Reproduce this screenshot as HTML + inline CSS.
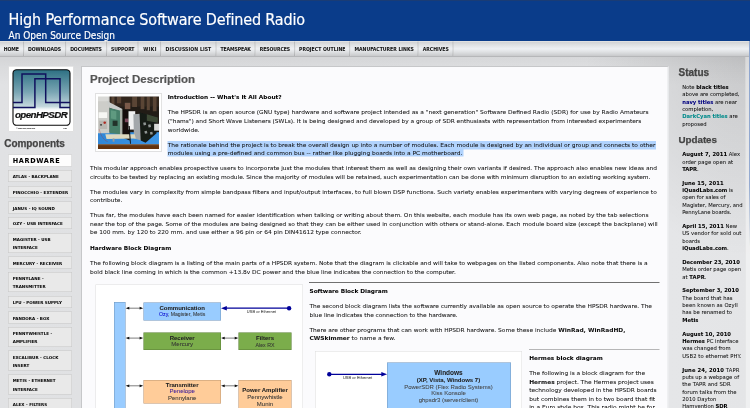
<!DOCTYPE html>
<html lang="en">
<head>
<meta charset="utf-8">
<title>High Performance Software Defined Radio</title>
<style>
html,body{margin:0;padding:0;width:750px;height:408px;overflow:hidden;background:#dcdcdc;}
#page{position:absolute;left:0;top:0;width:1500px;height:816px;transform:scale(.5);transform-origin:0 0;overflow:hidden;
 font-family:"DejaVu Sans","Liberation Sans",sans-serif;color:#222;
 background:linear-gradient(180deg,rgba(0,0,0,.06) 114px,rgba(0,0,0,.03) 134px,rgba(0,0,0,0) 170px),radial-gradient(ellipse 330px 400px at 1500px 114px,rgba(0,0,0,.125) 0,rgba(0,0,0,.07) 45%,rgba(0,0,0,0) 100%),linear-gradient(90deg,#e1e2e4 0,#e0e1e3 160px,#e5e6e8 1336px,#e4e5e7 1500px);}
.t{position:absolute;white-space:nowrap;line-height:1;-webkit-text-stroke:0.1px currentColor;}
#txt{position:absolute;left:0;top:0;width:1500px;height:816px;filter:blur(0.3px);}
.t b{font-weight:bold;}
#header{position:absolute;left:0;top:0;width:1500px;height:82px;background:#0a3c8a;border-top:1.6px solid #2a3c60;box-sizing:border-box;}
#nav{position:absolute;left:0;top:82px;width:1500px;height:32px;box-sizing:border-box;
 background:linear-gradient(180deg,#eeeeec 0,#d2d3d5 7%,#dfe1e3 26%,#eef0f3 52%,#e0e2e4 72%,#c8c9cb 100%);border-bottom:2px solid #b6b7b9;}
#nav i{position:absolute;top:1px;width:1.5px;height:29px;background:rgba(0,0,0,.13);border-right:1.5px solid rgba(255,255,255,.55);}
#logo{position:absolute;left:17px;top:132px;width:130px;height:131px;background:#fff;border:1.5px solid #cfcfcf;box-sizing:border-box;}
#main{position:absolute;left:162px;top:132px;width:1175px;height:700px;background:#fbfbfd;border:2px solid #c6c7c9;border-right-color:#e4e5e7;box-sizing:border-box;}
.mi{position:absolute;left:16px;width:128px;box-sizing:border-box;background:#e9e9e9;border:1.5px solid #c4c4c4;}
.mi.cur{background:#fdfdfd;}
.hl{position:absolute;background:#b1d3fd;}
.hr{position:absolute;height:1.4px;background:#707070;}
.dg{position:absolute;background:#fff;border:1px solid #dcdcdc;box-sizing:border-box;}
.bx{position:absolute;box-sizing:border-box;border:1.4px solid rgba(0,0,0,.28);}
#photo{position:absolute;left:190px;top:187px;width:134px;height:116px;background:#fff;border:1.5px solid #c4c4c4;box-sizing:border-box;overflow:hidden;}
#photo svg{left:5px;top:4px;}
#sbar{position:absolute;left:1490px;top:114px;width:10px;height:702px;background:rgba(255,255,255,.42);border-left:1px solid rgba(0,0,0,.07);box-sizing:border-box;}
#scroll{position:absolute;left:1497.5px;top:82px;width:3px;height:410px;background:linear-gradient(180deg,#4d74bc 0,#5a7ec2 70%,rgba(120,150,210,0) 100%);border-left:1.5px solid rgba(240,240,232,.8);}
svg{position:absolute;left:0;top:0;}
</style>
</head>
<body>
<div id="page">
<div id="header"></div>
<div id="nav"><i style="left:46px"></i><i style="left:130px"></i><i style="left:212px"></i><i style="left:275px"></i><i style="left:320px"></i><i style="left:431px"></i><i style="left:509px"></i><i style="left:588px"></i><i style="left:698px"></i><i style="left:835px"></i><i style="left:905px"></i></div>
<div id="logo"></div>
<div id="main"></div>
<div class="mi cur" style="top:309.4px;height:23.2px"></div>
<div class="mi" style="top:340.4px;height:24.0px"></div>
<div class="mi" style="top:371.7px;height:24.0px"></div>
<div class="mi" style="top:403.0px;height:24.0px"></div>
<div class="mi" style="top:434.3px;height:24.0px"></div>
<div class="mi" style="top:465.6px;height:40.0px"></div>
<div class="mi" style="top:512.9px;height:24.0px"></div>
<div class="mi" style="top:544.2px;height:40.0px"></div>
<div class="mi" style="top:591.5px;height:24.0px"></div>
<div class="mi" style="top:622.8px;height:24.0px"></div>
<div class="mi" style="top:654.1px;height:40.0px"></div>
<div class="mi" style="top:701.4px;height:40.0px"></div>
<div class="mi" style="top:748.7px;height:40.0px"></div>
<div class="mi" style="top:796.0px;height:24.0px"></div>
<div class="hl" style="left:335.0px;top:281.6px;width:977.4px;height:17.0px"></div>
<div class="hl" style="left:335.0px;top:298.4px;width:591.6px;height:14.8px"></div>
<div class="hr" style="left:618.4px;top:564.4px;width:700.2px"></div>
<div class="hr" style="left:1058.4px;top:697.6px;width:260.2px"></div>
<div class="dg" style="left:191.2px;top:569.0px;width:415.2px;height:300px"></div>
<div class="dg" style="left:630.4px;top:702.4px;width:414.0px;height:200px"></div>
<div class="bx" style="left:227.6px;top:604.0px;width:23.6px;height:236.0px;background:#99ccff"></div>
<div class="bx" style="left:286.8px;top:605.2px;width:155.0px;height:36.0px;background:#99ccff"></div>
<div class="bx" style="left:286.8px;top:664.8px;width:155.0px;height:35.2px;background:#7bad4b"></div>
<div class="bx" style="left:477.0px;top:664.8px;width:106.0px;height:35.2px;background:#7bad4b"></div>
<div class="bx" style="left:286.8px;top:759.6px;width:155.0px;height:47.2px;background:#ffcc99"></div>
<div class="bx" style="left:477.0px;top:759.6px;width:106.0px;height:80.4px;background:#ffcc99"></div>
<div class="bx" style="left:774.4px;top:725.0px;width:248.0px;height:115.0px;background:#99ccff"></div>
<svg width="1500" height="816" viewBox="0 0 750 408" style="pointer-events:none"><line x1="127.5" y1="308.2" x2="141.4" y2="308.2" stroke="#111" stroke-width="0.55"/><path d="M125.7 308.2 l3.6 -1.4 v2.8z M143.20000000000002 308.2 l-3.6 -1.4 v2.8z" fill="#111"/><line x1="127.5" y1="338.1" x2="141.4" y2="338.1" stroke="#111" stroke-width="0.55"/><path d="M125.7 338.1 l3.6 -1.4 v2.8z M143.20000000000002 338.1 l-3.6 -1.4 v2.8z" fill="#111"/><line x1="127.5" y1="385.8" x2="141.4" y2="385.8" stroke="#111" stroke-width="0.55"/><path d="M125.7 385.8 l3.6 -1.4 v2.8z M143.20000000000002 385.8 l-3.6 -1.4 v2.8z" fill="#111"/><line x1="222.9" y1="338.1" x2="236.5" y2="338.1" stroke="#111" stroke-width="0.55"/><path d="M221.1 338.1 l3.6 -1.4 v2.8z M238.3 338.1 l-3.6 -1.4 v2.8z" fill="#111"/><line x1="222.9" y1="385.8" x2="236.5" y2="385.8" stroke="#111" stroke-width="0.55"/><path d="M221.1 385.8 l3.6 -1.4 v2.8z M238.3 385.8 l-3.6 -1.4 v2.8z" fill="#111"/><line x1="225" y1="308.2" x2="289.1" y2="308.2" stroke="#000099" stroke-width="1.25"/><circle cx="289.1" cy="308.2" r="2.2" fill="#000099"/><path d="M221 308.2 l5.8 -2.3 v4.6z" fill="#000099"/><line x1="329.3" y1="374.3" x2="383" y2="374.3" stroke="#000099" stroke-width="1.25"/><circle cx="329.3" cy="374.3" r="2.2" fill="#000099"/><path d="M387.1 374.3 l-5.8 -2.3 v4.6z" fill="#000099"/><defs><linearGradient id="lg" x1="0" y1="0" x2="0" y2="1"><stop offset="0" stop-color="#2d7083"/><stop offset="0.4" stop-color="#79a5b3"/><stop offset="0.66" stop-color="#c3d7dd"/><stop offset="0.71" stop-color="#f2f7f8"/><stop offset="0.75" stop-color="#fff"/></linearGradient>
<clipPath id="lc"><rect x="13" y="69.7" width="57" height="55.6" rx="3.6"/></clipPath></defs>
<rect x="13" y="69.7" width="57" height="55.6" rx="3.6" fill="url(#lg)" stroke="#0a0a0a" stroke-width="1.1"/>
<g clip-path="url(#lc)" fill="none" stroke="#10105e" stroke-width="1.5"><path d="M12 102.6H22V74H45.7V102.6H71"/><path d="M12 107.4H34.9V78.7H60V107.4H71"/></g></svg>
<div id="photo"><svg width="122" height="105" viewBox="0 0 100 100" style="left:5px;top:5px" preserveAspectRatio="none">
<defs><filter id="pb" x="-5%" y="-5%" width="110%" height="110%"><feGaussianBlur stdDeviation="0.9"/></filter>
<linearGradient id="tb" x1="0" y1="0" x2="1" y2="0"><stop offset="0" stop-color="#2f86d6"/><stop offset="1" stop-color="#3f97e6"/></linearGradient></defs>
<g filter="url(#pb)">
<rect x="-5" y="-5" width="110" height="110" fill="#241d19"/>
<rect x="-5" y="-5" width="110" height="24" fill="#30261f"/>
<g fill="#5a4536"><rect x="22" y="0" width="5" height="17"/><rect x="31" y="0" width="7" height="13"/><rect x="56" y="0" width="8" height="20"/><rect x="70" y="0" width="6" height="24"/><rect x="80" y="0" width="5" height="26"/><rect x="90" y="0" width="6" height="28"/></g>
<rect x="44" y="12" width="9" height="12" fill="#7a5a48"/>
<rect x="-5" y="68" width="110" height="26" fill="url(#tb)"/>
<rect x="-5" y="92.5" width="110" height="14" fill="#63300f"/>
<rect x="-5" y="90.8" width="110" height="2" fill="#8a5a32"/>
<rect x="-5" y="-5" width="24" height="75" fill="#cdcdc9"/>
<rect x="-5" y="-5" width="22" height="14" fill="#d9d9d6"/>
<rect x="1" y="30" width="14" height="11" fill="#f7f7f4"/>
<rect x="2" y="46" width="13" height="16" fill="#b9b7b2"/>
<circle cx="11" cy="50" r="2.2" fill="#b02a22"/><circle cx="5" cy="54" r="1.6" fill="#333"/>
<path d="M14 8 L40 24 L40 30 L19 22 Z" fill="#c9ccca"/>
<path d="M19 22 L38 27 L38 72 L19 70 Z" fill="#46806a"/>
<path d="M21 26 L30 28 L30 44 L21 42 Z" fill="#5f9a80"/>
<rect x="24" y="46" width="8" height="10" fill="#22302a"/>
<path d="M36 26 L41 24 L41 76 L36 74 Z" fill="#aab0a8"/>
<path d="M40 24 L52 27 L52 84 L40 78 Z" fill="#14110f"/>
<rect x="44" y="42" width="6" height="7" fill="#7c4a5c"/>
<rect x="50" y="28" width="11" height="35" fill="#f0f1f1"/>
<path d="M58 34 L70 33 L71 84 L59 80 Z" fill="#a3a8ab"/>
<path d="M68 30 L95 38 L96 70 L78 88 L70 84 Z" fill="#191a18"/>
<path d="M80 34 L98 40 L98 50 L80 46 Z" fill="#3d4a36"/>
<path d="M74 50 l4 -1 l1 5 l-4 1z M82 54 l4 -1 l1 5 l-4 1z M76 66 l4 -1 l1 5 l-4 1z M85 68 l4 -1 l1 5 l-4 1z" fill="#8f9693"/>
<rect x="92" y="52" width="13" height="13" fill="#d9dad8"/>
<path d="M12 72 L60 72 L62 80 L14 81 Z" fill="#ddd8bf"/>
<rect x="24" y="80" width="3" height="6" fill="#999"/>
<path d="M50 56 L52 56 L54 90 L52.5 90 Z" fill="#111"/>
<path d="M2 62 C4 74 10 84 16 86" stroke="#a33" stroke-width="0.6" fill="none"/>
</g></svg></div>
<div id="sbar"></div><div id="scroll"></div>
<div id="txt">
<span class="t" style="left:17.0px;top:22.9px;font-size:32px;font-family:'DejaVu Sans Condensed','DejaVu Sans','Liberation Sans',sans-serif;color:#fff;letter-spacing:-0.304px;-webkit-text-stroke:0.35px #fff;">High Performance Software Defined Radio</span>
<span class="t" style="left:17.0px;top:59.5px;font-size:20px;font-family:'DejaVu Sans Condensed','DejaVu Sans','Liberation Sans',sans-serif;color:#fff;letter-spacing:0.009px;-webkit-text-stroke:0.3px #fff;">An Open Source Design</span>
<span class="t" style="left:7.6px;top:93.8px;font-size:9.2px;font-weight:bold;color:#111;letter-spacing:-0.280px;">HOME</span>
<span class="t" style="left:55.8px;top:93.8px;font-size:9.2px;font-weight:bold;color:#111;letter-spacing:-0.169px;">DOWNLOADS</span>
<span class="t" style="left:140.4px;top:93.8px;font-size:9.2px;font-weight:bold;color:#111;letter-spacing:-0.271px;">DOCUMENTS</span>
<span class="t" style="left:222.0px;top:93.8px;font-size:9.2px;font-weight:bold;color:#111;letter-spacing:-0.214px;">SUPPORT</span>
<span class="t" style="left:286.6px;top:93.8px;font-size:9.2px;font-weight:bold;color:#111;letter-spacing:0.677px;">WIKI</span>
<span class="t" style="left:331.2px;top:93.8px;font-size:9.2px;font-weight:bold;color:#111;letter-spacing:0.162px;">DISCUSSION LIST</span>
<span class="t" style="left:441.0px;top:93.8px;font-size:9.2px;font-weight:bold;color:#111;letter-spacing:-0.228px;">TEAMSPEAK</span>
<span class="t" style="left:519.6px;top:93.8px;font-size:9.2px;font-weight:bold;color:#111;letter-spacing:-0.173px;">RESOURCES</span>
<span class="t" style="left:598.0px;top:93.8px;font-size:9.2px;font-weight:bold;color:#111;letter-spacing:0.034px;">PROJECT OUTLINE</span>
<span class="t" style="left:708.8px;top:93.8px;font-size:9.2px;font-weight:bold;color:#111;letter-spacing:0.015px;">MANUFACTURER LINKS</span>
<span class="t" style="left:845.6px;top:93.8px;font-size:9.2px;font-weight:bold;color:#111;letter-spacing:-0.031px;">ARCHIVES</span>
<span class="t" style="left:8.6px;top:277.1px;font-size:20px;font-family:'Liberation Sans',sans-serif;font-weight:bold;color:#444;letter-spacing:-0.142px;-webkit-text-stroke:0.5px #444;">Components</span>
<span class="t" style="left:25.4px;top:314.4px;font-size:13px;font-weight:bold;color:#000;letter-spacing:1.368px;">HARDWARE</span>
<span class="t" style="left:25.4px;top:349.1px;font-size:8.1px;font-weight:bold;color:#000;letter-spacing:0.029px;">ATLAS - BACKPLANE</span>
<span class="t" style="left:25.4px;top:380.4px;font-size:8.1px;font-weight:bold;color:#000;letter-spacing:0.139px;">PINOCCHIO - EXTENDER</span>
<span class="t" style="left:25.4px;top:411.7px;font-size:8.1px;font-weight:bold;color:#000;letter-spacing:0.1px;">JANUS - IQ SOUND</span>
<span class="t" style="left:25.4px;top:443.0px;font-size:8.1px;font-weight:bold;color:#000;letter-spacing:0.1px;">OZY - USB INTERFACE</span>
<span class="t" style="left:25.4px;top:474.3px;font-size:8.1px;font-weight:bold;color:#000;letter-spacing:0.1px;">MAGISTER - USB</span>
<span class="t" style="left:25.4px;top:490.5px;font-size:8.1px;font-weight:bold;color:#000;letter-spacing:0.1px;">INTERFACE</span>
<span class="t" style="left:25.4px;top:521.6px;font-size:8.1px;font-weight:bold;color:#000;letter-spacing:0.1px;">MERCURY - RECEIVER</span>
<span class="t" style="left:25.4px;top:552.9px;font-size:8.1px;font-weight:bold;color:#000;letter-spacing:0.1px;">PENNYLANE -</span>
<span class="t" style="left:25.4px;top:569.1px;font-size:8.1px;font-weight:bold;color:#000;letter-spacing:0.1px;">TRANSMITTER</span>
<span class="t" style="left:25.4px;top:600.2px;font-size:8.1px;font-weight:bold;color:#000;letter-spacing:0.1px;">LPU - POWER SUPPLY</span>
<span class="t" style="left:25.4px;top:631.5px;font-size:8.1px;font-weight:bold;color:#000;letter-spacing:0.1px;">PANDORA - BOX</span>
<span class="t" style="left:25.4px;top:662.8px;font-size:8.1px;font-weight:bold;color:#000;letter-spacing:0.1px;">PENNYWHISTLE -</span>
<span class="t" style="left:25.4px;top:679.0px;font-size:8.1px;font-weight:bold;color:#000;letter-spacing:0.1px;">AMPLIFIER</span>
<span class="t" style="left:25.4px;top:710.1px;font-size:8.1px;font-weight:bold;color:#000;letter-spacing:0.1px;">EXCALIBUR - CLOCK</span>
<span class="t" style="left:25.4px;top:726.3px;font-size:8.1px;font-weight:bold;color:#000;letter-spacing:0.1px;">INSERT</span>
<span class="t" style="left:25.4px;top:757.4px;font-size:8.1px;font-weight:bold;color:#000;letter-spacing:0.1px;">METIS - ETHERNET</span>
<span class="t" style="left:25.4px;top:773.6px;font-size:8.1px;font-weight:bold;color:#000;letter-spacing:0.1px;">INTERFACE</span>
<span class="t" style="left:25.4px;top:804.7px;font-size:8.1px;font-weight:bold;color:#000;letter-spacing:0.1px;">ALEX - FILTERS</span>
<span class="t" style="left:180.0px;top:147.1px;font-size:23px;font-family:'Liberation Sans',sans-serif;font-weight:bold;color:#555;letter-spacing:-0.047px;-webkit-text-stroke:0.4px #555;">Project Description</span>
<span class="t" style="left:335.4px;top:188.5px;font-size:11.6px;font-weight:bold;color:#000;letter-spacing:-0.004px;">Introduction -- What's It All About?</span>
<span class="t" style="left:335.4px;top:218.9px;font-size:11.8px;color:#111;">The HPSDR is an open source (GNU type) hardware and software project intended as a "next generation" Software Defined Radio (SDR) for use by Radio Amateurs</span>
<span class="t" style="left:335.4px;top:236.5px;font-size:11.8px;color:#111;letter-spacing:-0.036px;">("hams") and Short Wave Listeners (SWLs). It is being designed and developed by a group of SDR enthusiasts with representation from interested experimenters</span>
<span class="t" style="left:335.4px;top:253.9px;font-size:11.8px;color:#111;">worldwide.</span>
<span class="t" style="left:335.4px;top:283.5px;font-size:11.8px;color:#111;letter-spacing:-0.035px;">The rationale behind the project is to break the overall design up into a number of modules. Each module is designed by an individual or group and connects to other</span>
<span class="t" style="left:335.4px;top:300.9px;font-size:11.8px;color:#111;letter-spacing:-0.019px;">modules using a pre-defined and common bus -- rather like plugging boards into a PC motherboard.</span>
<span class="t" style="left:180.0px;top:330.7px;font-size:11.8px;color:#111;letter-spacing:-0.043px;">This modular approach enables prospective users to incorporate just the modules that interest them as well as designing their own variants if desired. The approach also enables new ideas and</span>
<span class="t" style="left:180.0px;top:348.3px;font-size:11.8px;color:#111;letter-spacing:-0.098px;">circuits to be tested by replacing an existing module. Since the majority of modules will be retained, such experimentation can be done with minimum disruption to an existing working system.</span>
<span class="t" style="left:180.0px;top:377.5px;font-size:11.8px;color:#111;letter-spacing:-0.038px;">The modules vary in complexity from simple bandpass filters and input/output interfaces, to full blown DSP functions. Such variety enables experimenters with varying degrees of experience to</span>
<span class="t" style="left:180.0px;top:395.1px;font-size:11.8px;color:#111;">contribute.</span>
<span class="t" style="left:180.0px;top:424.1px;font-size:11.8px;color:#111;letter-spacing:-0.045px;">Thus far, the modules have each been named for easier identification when talking or writing about them. On this website, each module has its own web page, as noted by the tab selections</span>
<span class="t" style="left:180.0px;top:441.7px;font-size:11.8px;color:#111;letter-spacing:-0.035px;">near the top of the page. Some of the modules are being designed so that they can be either used in conjunction with others or stand-alone. Each module board size (except the backplane) will</span>
<span class="t" style="left:180.0px;top:459.3px;font-size:11.8px;color:#111;letter-spacing:-0.007px;">be 100 mm. by 120 to 220 mm. and use either a 96 pin or 64 pin DIN41612 type connector.</span>
<span class="t" style="left:180.0px;top:491.1px;font-size:11.6px;font-weight:bold;color:#000;">Hardware Block Diagram</span>
<span class="t" style="left:180.0px;top:520.5px;font-size:11.8px;color:#111;letter-spacing:-0.030px;">The following block diagram is a listing of the main parts of a HPSDR system. Note that the diagram is clickable and will take to webpages on the listed components. Also note that there is a</span>
<span class="t" style="left:180.0px;top:538.1px;font-size:11.8px;color:#111;letter-spacing:-0.064px;">bold black line coming in which is the common +13.8v DC power and the blue line indicates the connection to the computer.</span>
<span class="t" style="left:619.0px;top:577.1px;font-size:11.6px;font-weight:bold;color:#000;letter-spacing:-0.063px;">Software Block Diagram</span>
<span class="t" style="left:619.0px;top:606.7px;font-size:11.8px;color:#111;letter-spacing:-0.034px;">The second block diagram lists the software currently available as open source to operate the HPSDR hardware. The</span>
<span class="t" style="left:619.0px;top:624.3px;font-size:11.8px;color:#111;letter-spacing:-0.094px;">blue line indicates the connection to the hardware.</span>
<span class="t" style="left:619.0px;top:653.7px;font-size:11.8px;color:#111;">There are other programs that can work with HPSDR hardware. Some these include <b>WinRad, WinRadHD,</b></span>
<span class="t" style="left:619.0px;top:671.1px;font-size:11.8px;color:#111;"><b>CWSkimmer</b> to name a few.</span>
<span class="t" style="left:1058.4px;top:710.3px;font-size:11.6px;font-weight:bold;color:#000;">Hermes block diagram</span>
<span class="t" style="left:1058.4px;top:741.3px;font-size:11.8px;color:#111;letter-spacing:-0.055px;">The following is a block diagram for the</span>
<span class="t" style="left:1058.4px;top:758.3px;font-size:11.8px;color:#111;letter-spacing:-0.022px;"><b>Hermes</b> project. The Hermes project uses</span>
<span class="t" style="left:1058.4px;top:775.3px;font-size:11.8px;color:#111;letter-spacing:-0.057px;">technology developed in the HPSDR boards</span>
<span class="t" style="left:1058.4px;top:792.1px;font-size:11.8px;color:#111;letter-spacing:0.013px;">but combines them in to two board that fit</span>
<span class="t" style="left:1058.4px;top:809.1px;font-size:11.8px;color:#111;">in a Euro style box. This radio might be for</span>
<span class="t" style="left:1357.2px;top:134.3px;font-size:20px;font-family:'Liberation Sans',sans-serif;font-weight:bold;color:#444;letter-spacing:-0.054px;-webkit-text-stroke:0.5px #444;">Status</span>
<span class="t" style="left:1357.2px;top:270.2px;font-size:19.6px;font-family:'Liberation Sans',sans-serif;font-weight:bold;color:#444;-webkit-text-stroke:0.5px #444;letter-spacing:-0.1px;">Updates</span>
<span class="t" style="left:1364.4px;top:168.7px;font-size:10.5px;color:#111;letter-spacing:-0.063px;">Note <b style="color:#000">black titles</b></span>
<span class="t" style="left:1364.4px;top:183.3px;font-size:10.5px;color:#111;letter-spacing:-0.025px;">above are completed,</span>
<span class="t" style="left:1364.4px;top:197.8px;font-size:10.5px;color:#111;letter-spacing:-0.022px;"><b style="color:#000080">navy titles</b> are near</span>
<span class="t" style="left:1364.4px;top:212.4px;font-size:10.5px;color:#111;">completion,</span>
<span class="t" style="left:1364.4px;top:227.0px;font-size:10.5px;color:#111;letter-spacing:-0.025px;"><b style="color:#008b8b">DarkCyan titles</b> are</span>
<span class="t" style="left:1364.4px;top:241.5px;font-size:10.5px;color:#111;letter-spacing:-0.034px;">proposed</span>
<span class="t" style="left:1364.4px;top:303.1px;font-size:10.5px;color:#111;"><b style="color:#000">August 7, 2011</b> Alex</span>
<span class="t" style="left:1364.4px;top:317.6px;font-size:10.5px;color:#111;letter-spacing:0.033px;">order page open at</span>
<span class="t" style="left:1364.4px;top:332.1px;font-size:10.5px;color:#111;letter-spacing:-0.162px;"><b style="color:#000">TAPR</b>.</span>
<span class="t" style="left:1364.4px;top:360.1px;font-size:10.5px;color:#111;letter-spacing:0.144px;"><b style="color:#000">June 15, 2011</b></span>
<span class="t" style="left:1364.4px;top:374.6px;font-size:10.5px;color:#111;letter-spacing:-0.028px;"><b style="color:#000">iQuadLabs.com</b> is</span>
<span class="t" style="left:1364.4px;top:389.1px;font-size:10.5px;color:#111;letter-spacing:-0.078px;">open for sales of</span>
<span class="t" style="left:1364.4px;top:403.7px;font-size:10.5px;color:#111;letter-spacing:-0.005px;">Magister, Mercury, and</span>
<span class="t" style="left:1364.4px;top:418.3px;font-size:10.5px;color:#111;letter-spacing:-0.107px;">PennyLane boards.</span>
<span class="t" style="left:1364.4px;top:446.5px;font-size:10.5px;color:#111;letter-spacing:0.011px;"><b style="color:#000">April 15, 2011</b> New</span>
<span class="t" style="left:1364.4px;top:461.1px;font-size:10.5px;color:#111;letter-spacing:0.039px;">US vendor for sold out</span>
<span class="t" style="left:1364.4px;top:475.5px;font-size:10.5px;color:#111;">boards</span>
<span class="t" style="left:1364.4px;top:490.1px;font-size:10.5px;color:#111;letter-spacing:-0.076px;"><b style="color:#000">iQuadLabs.com</b>.</span>
<span class="t" style="left:1364.4px;top:518.1px;font-size:10.5px;color:#111;letter-spacing:0.007px;"><b style="color:#000">December 23, 2010</b></span>
<span class="t" style="left:1364.4px;top:532.9px;font-size:10.5px;color:#111;letter-spacing:-0.041px;">Metis order page open</span>
<span class="t" style="left:1364.4px;top:547.5px;font-size:10.5px;color:#111;letter-spacing:0.137px;">at <b style="color:#000">TAPR</b>.</span>
<span class="t" style="left:1364.4px;top:575.3px;font-size:10.5px;color:#111;letter-spacing:0.015px;"><b style="color:#000">September 3, 2010</b></span>
<span class="t" style="left:1364.4px;top:589.9px;font-size:10.5px;color:#111;letter-spacing:0.047px;">The board that has</span>
<span class="t" style="left:1364.4px;top:604.5px;font-size:10.5px;color:#111;letter-spacing:0.129px;">been known as OzyII</span>
<span class="t" style="left:1364.4px;top:619.1px;font-size:10.5px;color:#111;letter-spacing:0.022px;">has be renamed to</span>
<span class="t" style="left:1364.4px;top:633.7px;font-size:10.5px;color:#111;"><b style="color:#000">Metis</b></span>
<span class="t" style="left:1364.4px;top:661.5px;font-size:10.5px;color:#111;letter-spacing:0.040px;"><b style="color:#000">August 10, 2010</b></span>
<span class="t" style="left:1364.4px;top:676.5px;font-size:10.5px;color:#111;letter-spacing:-0.009px;"><b style="color:#000">Hermes</b> PC interface</span>
<span class="t" style="left:1364.4px;top:691.3px;font-size:10.5px;color:#111;letter-spacing:-0.008px;">was changed from</span>
<span class="t" style="left:1364.4px;top:705.9px;font-size:10.5px;color:#111;letter-spacing:0.128px;">USB2 to ethernet PHY.</span>
<span class="t" style="left:1364.4px;top:733.9px;font-size:10.5px;color:#111;letter-spacing:0.196px;"><b style="color:#000">June 24, 2010</b> TAPR</span>
<span class="t" style="left:1364.4px;top:748.5px;font-size:10.5px;color:#111;letter-spacing:-0.024px;">puts up a webpage of</span>
<span class="t" style="left:1364.4px;top:763.1px;font-size:10.5px;color:#111;letter-spacing:0.083px;">the TAPR and SDR</span>
<span class="t" style="left:1364.4px;top:777.7px;font-size:10.5px;color:#111;letter-spacing:0.028px;">forum talks from the</span>
<span class="t" style="left:1364.4px;top:792.3px;font-size:10.5px;color:#111;letter-spacing:0.018px;">2010 Dayton</span>
<span class="t" style="left:1364.4px;top:806.9px;font-size:10.5px;color:#111;letter-spacing:-0.066px;">Hamvention <b style="color:#000">SDR</b></span>
<span class="t" style="left:364.4px;top:609.4px;font-size:12px;font-family:'Liberation Sans',sans-serif;font-weight:bold;color:#222;transform:translateX(-50%);">Communication</span>
<span class="t" style="left:364.4px;top:623.3px;font-size:10.3px;font-family:'Liberation Sans',sans-serif;color:#333;transform:translateX(-50%);"><span style="color:#0000cc">Ozy</span>, Magister, Metis</span>
<span class="t" style="left:522.8px;top:619.0px;font-size:8px;font-family:'Liberation Sans',sans-serif;color:#444;transform:translateX(-50%);">USB or Ethernet</span>
<span class="t" style="left:364.4px;top:669.2px;font-size:12px;font-family:'Liberation Sans',sans-serif;font-weight:bold;color:#222;transform:translateX(-50%);">Receiver</span>
<span class="t" style="left:364.4px;top:682.4px;font-size:12px;font-family:'Liberation Sans',sans-serif;color:#333;transform:translateX(-50%);">Mercury</span>
<span class="t" style="left:530.0px;top:669.2px;font-size:12px;font-family:'Liberation Sans',sans-serif;font-weight:bold;color:#222;transform:translateX(-50%);">Filters</span>
<span class="t" style="left:530.0px;top:683.7px;font-size:10.5px;font-family:'Liberation Sans',sans-serif;color:#333;transform:translateX(-50%);">Alex RX</span>
<span class="t" style="left:364.4px;top:763.2px;font-size:12px;font-family:'Liberation Sans',sans-serif;font-weight:bold;color:#222;transform:translateX(-50%);">Transmitter</span>
<span class="t" style="left:364.4px;top:776.4px;font-size:12px;font-family:'Liberation Sans',sans-serif;color:#3a1a9a;transform:translateX(-50%);">Penelope</span>
<span class="t" style="left:364.4px;top:789.6px;font-size:12px;font-family:'Liberation Sans',sans-serif;color:#333;transform:translateX(-50%);">Pennylane</span>
<span class="t" style="left:530.0px;top:774.0px;font-size:12px;font-family:'Liberation Sans',sans-serif;font-weight:bold;color:#222;transform:translateX(-50%);">Power Amplifier</span>
<span class="t" style="left:530.0px;top:788.4px;font-size:12px;font-family:'Liberation Sans',sans-serif;color:#333;transform:translateX(-50%);">Pennywhistle</span>
<span class="t" style="left:530.0px;top:801.6px;font-size:12px;font-family:'Liberation Sans',sans-serif;color:#333;transform:translateX(-50%);">Munin</span>
<span class="t" style="left:897.0px;top:737.8px;font-size:13px;font-family:'Liberation Sans',sans-serif;font-weight:bold;color:#222;transform:translateX(-50%);">Windows</span>
<span class="t" style="left:897.0px;top:753.2px;font-size:12px;font-family:'Liberation Sans',sans-serif;font-weight:bold;color:#222;transform:translateX(-50%);">(XP, Vista, Windows 7)</span>
<span class="t" style="left:897.0px;top:766.6px;font-size:12px;font-family:'Liberation Sans',sans-serif;color:#444;transform:translateX(-50%);">PowerSDR (Flex Radio Systems)</span>
<span class="t" style="left:897.0px;top:780.0px;font-size:12px;font-family:'Liberation Sans',sans-serif;color:#444;transform:translateX(-50%);">Kiss Konsole</span>
<span class="t" style="left:897.0px;top:793.2px;font-size:12px;font-family:'Liberation Sans',sans-serif;color:#444;transform:translateX(-50%);">ghpsdr3 (server/client)</span>
<span class="t" style="left:715.0px;top:751.0px;font-size:8px;font-family:'Liberation Sans',sans-serif;color:#444;transform:translateX(-50%);">USB or Ethernet</span>
<span class="t" style="left:30.0px;top:219.9px;font-size:19.5px;font-family:'Liberation Sans',sans-serif;font-weight:bold;font-style:italic;color:#111;letter-spacing:-1.183px;-webkit-text-stroke:0.4px #111;">openHPSDR</span>
<span class="t" style="left:33.0px;top:254.5px;font-size:3.4px;font-family:'Liberation Sans',sans-serif;color:#222;">© 2006-2009, 2010-2011</span>
<span class="t" style="left:126.6px;top:254.1px;font-size:4.6px;font-family:'Liberation Sans',sans-serif;font-weight:bold;color:#222;">TM</span>
</div>
</div>
</body>
</html>
